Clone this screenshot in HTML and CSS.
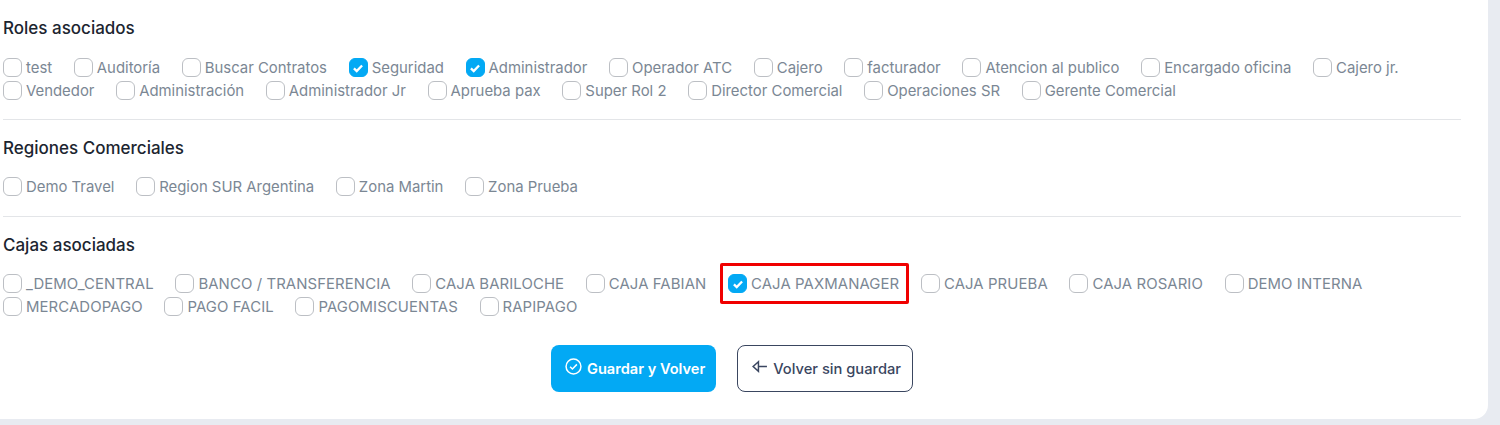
FILE: index.html
```html
<!DOCTYPE html>
<html lang="es">
<head>
    <meta charset="UTF-8">
    <title>Usuario</title>
    <link rel="stylesheet" href="styles.css">
</head>
<body>
    <div class="card">
        <h5>Roles asociados</h5>
        <div class="checks">
            <label class="check"><span class="box"></span>test</label>
            <label class="check"><span class="box"></span>Auditoría</label>
            <label class="check"><span class="box"></span>Buscar Contratos</label>
            <label class="check"><span class="box on"><svg viewBox="0 0 12 12"><path d="M2.5 6.3l2.4 2.3 4.6-4.8"/></svg></span>Seguridad</label>
            <label class="check"><span class="box on"><svg viewBox="0 0 12 12"><path d="M2.5 6.3l2.4 2.3 4.6-4.8"/></svg></span>Administrador</label>
            <label class="check"><span class="box"></span>Operador ATC</label>
            <label class="check"><span class="box"></span>Cajero</label>
            <label class="check"><span class="box"></span>facturador</label>
            <label class="check"><span class="box"></span>Atencion al publico</label>
            <label class="check"><span class="box"></span>Encargado oficina</label>
            <label class="check"><span class="box"></span>Cajero jr.</label>
            <label class="check"><span class="box"></span>Vendedor</label>
            <label class="check"><span class="box"></span>Administración</label>
            <label class="check"><span class="box"></span>Administrador Jr</label>
            <label class="check"><span class="box"></span>Aprueba pax</label>
            <label class="check"><span class="box"></span>Super Rol 2</label>
            <label class="check"><span class="box"></span>Director Comercial</label>
            <label class="check"><span class="box"></span>Operaciones SR</label>
            <label class="check"><span class="box"></span>Gerente Comercial</label>
        </div>
        <hr>
        <h5>Regiones Comerciales</h5>
        <div class="checks">
            <label class="check"><span class="box"></span>Demo Travel</label>
            <label class="check"><span class="box"></span>Region SUR Argentina</label>
            <label class="check"><span class="box"></span>Zona Martin</label>
            <label class="check"><span class="box"></span>Zona Prueba</label>
        </div>
        <hr>
        <h5>Cajas asociadas</h5>
        <div class="checks upper">
            <label class="check"><span class="box"></span>_DEMO_CENTRAL</label>
            <label class="check"><span class="box"></span>BANCO / TRANSFERENCIA</label>
            <label class="check"><span class="box"></span>CAJA BARILOCHE</label>
            <label class="check"><span class="box"></span>CAJA FABIAN</label>
            <label class="check marked"><span class="box on"><svg viewBox="0 0 12 12"><path d="M2.5 6.3l2.4 2.3 4.6-4.8"/></svg></span>CAJA PAXMANAGER</label>
            <label class="check"><span class="box"></span>CAJA PRUEBA</label>
            <label class="check"><span class="box"></span>CAJA ROSARIO</label>
            <label class="check"><span class="box"></span>DEMO INTERNA</label>
            <label class="check"><span class="box"></span>MERCADOPAGO</label>
            <label class="check"><span class="box"></span>PAGO FACIL</label>
            <label class="check"><span class="box"></span>PAGOMISCUENTAS</label>
            <label class="check"><span class="box"></span>RAPIPAGO</label>
        </div>
        <div class="actions">
            <button class="btn primary"><svg viewBox="0 0 16 16"><circle cx="8" cy="8" r="7"/><path d="M4.8 8.2l2.2 2.2 4.2-4.4"/></svg>Guardar y Volver</button>
            <button class="btn outline"><svg viewBox="0 0 16 16"><path d="M15 8H7M7 3.5L2 8l5 4.5z"/></svg>Volver sin guardar</button>
        </div>
    </div>
</body>
</html>
```

FILE: styles.css
```css
body {
    margin: 0;
    height: 425px;
    overflow: hidden;
    background-color: #e8ebf1;
    font-family: Inter, "Liberation Sans", sans-serif;
    font-size: 14.9px;
    color: #7b8794;
}
.card {
    width: 1488px;
    height: 419px;
    box-sizing: border-box;
    padding: 19px 27px 0 3px;
    background-color: white;
    border-bottom-right-radius: 14px;
}
h5 {
    margin: 0 0 18px;
    height: 19px;
    line-height: 19px;
    font-size: 17px;
    font-weight: 500;
    color: #1c2530;
}
hr + h5 {
    margin-bottom: 17px;
}
hr {
    margin: 17px 0 19px;
    border: none;
    border-top: 1px solid #e3e5e8;
}
hr ~ hr {
    margin-top: 18px;
}
.checks {
    display: flex;
    flex-wrap: wrap;
    column-gap: 21.7px;
}
.upper {
    letter-spacing: 0.1px;
}
.check {
    display: flex;
    align-items: center;
    gap: 4px;
    height: 23px;
}
.box {
    width: 19px;
    height: 19px;
    box-sizing: border-box;
    border: 1px solid #bcbfc4;
    border-radius: 6px;
    background-color: white;
}
.box.on {
    display: flex;
    align-items: center;
    justify-content: center;
    border-color: #03a9f4;
    background-color: #03a9f4;
}
.box svg {
    width: 14px;
    height: 14px;
    fill: none;
    stroke: white;
    stroke-width: 2;
}
.marked {
    position: relative;
}
.marked::after {
    content: "";
    position: absolute;
    inset: -9px -10px -9px -8px;
    border: 3px solid #f00000;
    border-radius: 2px;
}
.actions {
    display: flex;
    justify-content: center;
    gap: 21px;
    margin-top: 27px;
}
.btn {
    display: flex;
    align-items: center;
    gap: 5px;
    height: 47px;
    padding: 0 11px 0 14px;
    border-radius: 8px;
    font-family: inherit;
    font-size: 14.7px;
    font-weight: 450;
}
.btn svg {
    width: 17px;
    height: 17px;
    margin-top: -4px;
    fill: none;
    stroke-width: 1.4;
}
.primary {
    border: none;
    background-color: #03a9f4;
    color: white;
    font-size: 14.6px;
    font-weight: 600;
}
.primary svg {
    stroke: white;
}
.outline {
    padding-left: 13px;
    border: 1px solid #3a4660;
    background-color: white;
    color: #3a4660;
}
.outline svg {
    stroke: #3a4660;
}
```
